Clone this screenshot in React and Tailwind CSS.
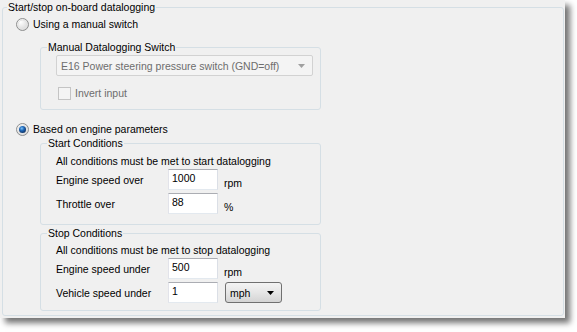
import React from 'react';

// Win7-style radio button drawn as svg
function RadioDot({ checked }) {
  return (
    <svg width="13" height="13" viewBox="0 0 13 13" className="shrink-0">
      <defs>
        <radialGradient id={checked ? 'rgOn' : 'rgOff'} cx="0.35" cy="0.3" r="0.8">
          <stop offset="0" stopColor="#ffffff" />
          <stop offset="1" stopColor="#d2d2d2" />
        </radialGradient>
        <radialGradient id="rgDot" cx="0.4" cy="0.35" r="0.7">
          <stop offset="0" stopColor="#7cc4f8" />
          <stop offset="0.45" stopColor="#1f67b8" />
          <stop offset="1" stopColor="#0f2f5e" />
        </radialGradient>
      </defs>
      <circle cx="6.5" cy="6.5" r="6" fill={checked ? 'url(#rgOn)' : 'url(#rgOff)'} stroke="#8e8f8f" strokeWidth="1" />
      <circle cx="6.5" cy="6.5" r="4.5" fill="none" stroke="#e4e4e4" strokeWidth="1" />
      {checked && <circle cx="6.5" cy="6.5" r="3.5" fill="url(#rgDot)" />}
    </svg>
  );
}

function TextBox({ value }) {
  return (
    <input
      readOnly
      value={value}
      className="w-[50px] h-[21px] shrink-0 bg-white px-[3px] pb-[4px] border border-t-[#abadb3] border-l-[#e2e3ea] border-r-[#dbdfe6] border-b-[#e3e9ef] outline-none"
    />
  );
}

export default function App() {
  return (
    <div className="min-h-screen bg-white text-[10.5px] leading-[14px] text-black font-['Liberation_Sans',Arial,sans-serif]">
      <div className="w-[565px] h-[318px] bg-[#f0f0f0] pl-[2px] shadow-[5px_5px_6px_rgba(0,0,0,0.55)]">
        <fieldset className="w-[562px] h-[316px] border border-[#d5dfe5] rounded-[3px]">
          <legend className="ml-[4px] px-[1px]">Start/stop on-board datalogging</legend>

          {/* manual switch option */}
          <div className="flex items-center gap-[4px] h-[14px] mt-[3px] ml-[13px]">
            <RadioDot checked={false} />
            <span>Using a manual switch</span>
          </div>

          <fieldset className="ml-[37px] mt-[9px] w-[281px] pb-[9px] border border-[#d5dfe5] rounded-[3px]">
            <legend className="ml-[6px] px-[1px]">Manual Datalogging Switch</legend>
            <div className="ml-[15px] mt-[1px] w-[257px] h-[21px] flex items-center justify-between pl-[4px] pr-[7px] bg-[#f4f4f4] border border-[#d2d2d2] rounded-[2px] text-[#6d6d6d]">
              <span>E16 Power steering pressure switch (GND=off)</span>
              <svg width="7" height="4" viewBox="0 0 7 4">
                <path d="M0 0h7L3.5 4z" fill="#a0a0a0" />
              </svg>
            </div>
            <div className="flex items-center gap-[4px] h-[14px] mt-[10px] ml-[17px] text-[#6d6d6d]">
              <div className="w-[13px] h-[13px] border border-[#c4c4c4] bg-[#f4f4f4]" />
              <span>Invert input</span>
            </div>
          </fieldset>

          {/* engine parameters option */}
          <div className="flex items-center gap-[4px] h-[14px] mt-[12px] ml-[13px]">
            <RadioDot checked />
            <span>Based on engine parameters</span>
          </div>

          <fieldset className="ml-[37px] w-[281px] pb-[10px] border border-[#d5dfe5] rounded-[3px]">
            <legend className="ml-[6px] px-[1px]">Start Conditions</legend>
            <div className="pl-[15px]">
              <div className="h-[14px] mt-[4px]">All conditions must be met to start datalogging</div>
              <div className="flex h-[21px] mt-[1px]">
                <span className="w-[112px] self-center">Engine speed over</span>
                <TextBox value="1000" />
                <span className="ml-[6px] self-end">rpm</span>
              </div>
              <div className="flex h-[21px] mt-[3px]">
                <span className="w-[112px] self-center">Throttle over</span>
                <TextBox value="88" />
                <span className="ml-[6px] self-end">%</span>
              </div>
            </div>
          </fieldset>

          <fieldset className="ml-[37px] mt-[1px] w-[281px] pb-[7px] border border-[#d5dfe5] rounded-[3px]">
            <legend className="ml-[6px] px-[1px]">Stop Conditions</legend>
            <div className="pl-[15px]">
              <div className="h-[14px] mt-[3px]">All conditions must be met to stop datalogging</div>
              <div className="flex h-[21px] mt-[1px]">
                <span className="w-[112px] self-center">Engine speed under</span>
                <TextBox value="500" />
                <span className="ml-[6px] self-end">rpm</span>
              </div>
              <div className="flex h-[21px] mt-[3px]">
                <span className="w-[112px] self-center">Vehicle speed under</span>
                <TextBox value="1" />
                <div className="ml-[7px] w-[57px] h-[21px] flex items-center justify-between pl-[4px] pr-[7px] border border-[#707070] rounded-[3px] bg-gradient-to-b from-[#f4f4f4] via-[#e6e6e6] to-[#d4d4d4]">
                  <span>mph</span>
                  <svg width="7" height="4" viewBox="0 0 7 4">
                    <path d="M0 0h7L3.5 4z" fill="#000" />
                  </svg>
                </div>
              </div>
            </div>
          </fieldset>
        </fieldset>
      </div>
    </div>
  );
}
